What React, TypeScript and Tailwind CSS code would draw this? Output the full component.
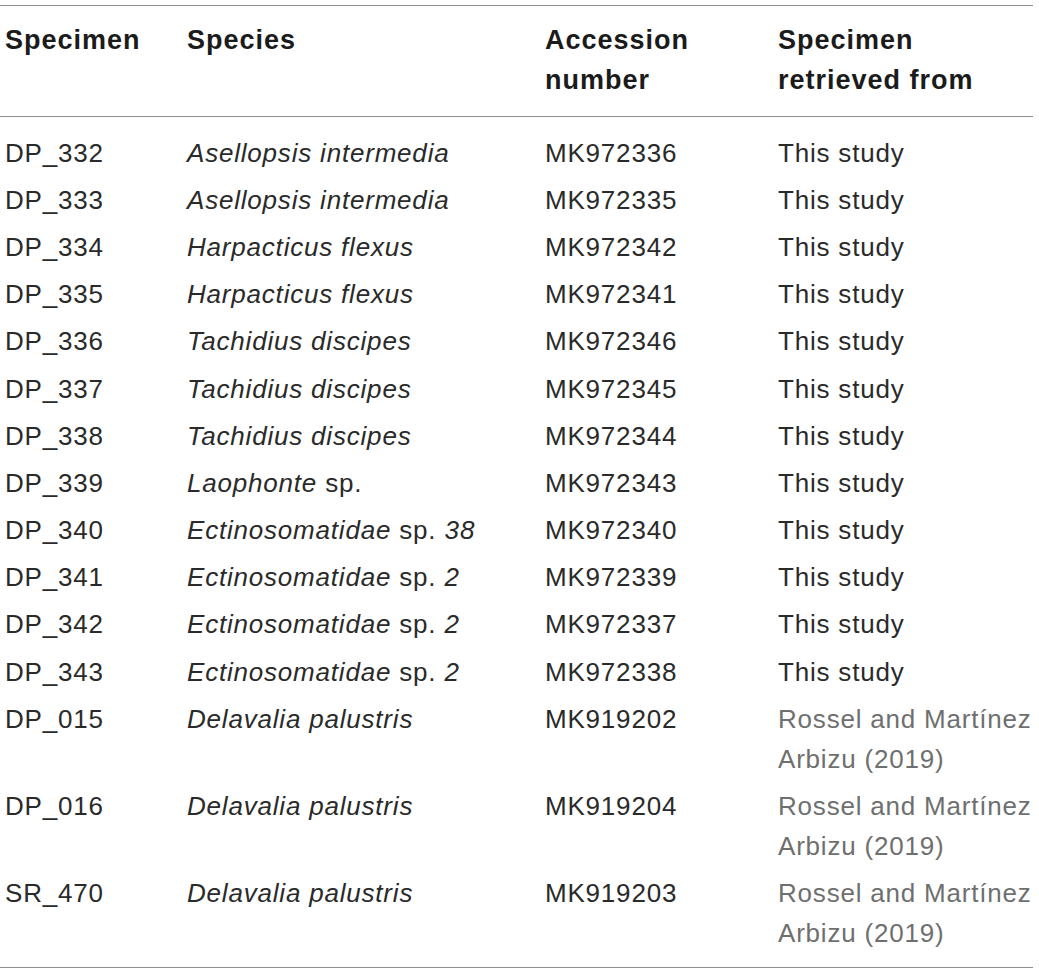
import React from "react";

type Row = {
  id: string;
  genus: string;
  rest?: string;
  num?: string;
  acc: string;
  src: "study" | "rossel";
};

const rows: Row[] = [
  { id: "DP_332", genus: "Asellopsis intermedia", acc: "MK972336", src: "study" },
  { id: "DP_333", genus: "Asellopsis intermedia", acc: "MK972335", src: "study" },
  { id: "DP_334", genus: "Harpacticus flexus", acc: "MK972342", src: "study" },
  { id: "DP_335", genus: "Harpacticus flexus", acc: "MK972341", src: "study" },
  { id: "DP_336", genus: "Tachidius discipes", acc: "MK972346", src: "study" },
  { id: "DP_337", genus: "Tachidius discipes", acc: "MK972345", src: "study" },
  { id: "DP_338", genus: "Tachidius discipes", acc: "MK972344", src: "study" },
  { id: "DP_339", genus: "Laophonte", rest: " sp.", acc: "MK972343", src: "study" },
  { id: "DP_340", genus: "Ectinosomatidae", rest: " sp. ", num: "38", acc: "MK972340", src: "study" },
  { id: "DP_341", genus: "Ectinosomatidae", rest: " sp. ", num: "2", acc: "MK972339", src: "study" },
  { id: "DP_342", genus: "Ectinosomatidae", rest: " sp. ", num: "2", acc: "MK972337", src: "study" },
  { id: "DP_343", genus: "Ectinosomatidae", rest: " sp. ", num: "2", acc: "MK972338", src: "study" },
  { id: "DP_015", genus: "Delavalia palustris", acc: "MK919202", src: "rossel" },
  { id: "DP_016", genus: "Delavalia palustris", acc: "MK919204", src: "rossel" },
  { id: "SR_470", genus: "Delavalia palustris", acc: "MK919203", src: "rossel" },
];

export default function App() {
  return (
    <div className="w-[1039px] h-[974px] bg-white pt-[5px] font-['Liberation_Sans',Arial,sans-serif]">
      <div className="w-[1033px] border-t border-b border-[#8f8f8f]">
        <div className="grid grid-cols-[187px_358px_233px_1fr] pt-[14px] pb-[16px] border-b border-[#8f8f8f] text-[27px] leading-[40px] font-bold tracking-[1px] text-[#1b1b1b]">
          <div className="pl-[5px]">Specimen</div>
          <div>Species</div>
          <div>
            Accession
            <br />
            number
          </div>
          <div>
            Specimen
            <br />
            retrieved from
          </div>
        </div>
        <div className="pt-[12px] pb-[10px] text-[26px] leading-[40px] tracking-[0.8px] text-[#2a2a2a]">
          {rows.map((r) => (
            <div
              key={r.id}
              className="grid grid-cols-[187px_358px_233px_1fr] py-[3.6px]"
            >
              <div className="pl-[5px]">{r.id}</div>
              <div className="whitespace-nowrap">
                <i>{r.genus}</i>
                {r.rest}
                {r.num && <i className="tracking-[1.2px]">{r.num}</i>}
              </div>
              <div>{r.acc}</div>
              {r.src === "study" ? (
                <div className="whitespace-nowrap">This study</div>
              ) : (
                <div className="whitespace-nowrap text-[#6f6f6f]">
                  Rossel and Martínez
                  <br />
                  Arbizu (2019)
                </div>
              )}
            </div>
          ))}
        </div>
      </div>
    </div>
  );
}
